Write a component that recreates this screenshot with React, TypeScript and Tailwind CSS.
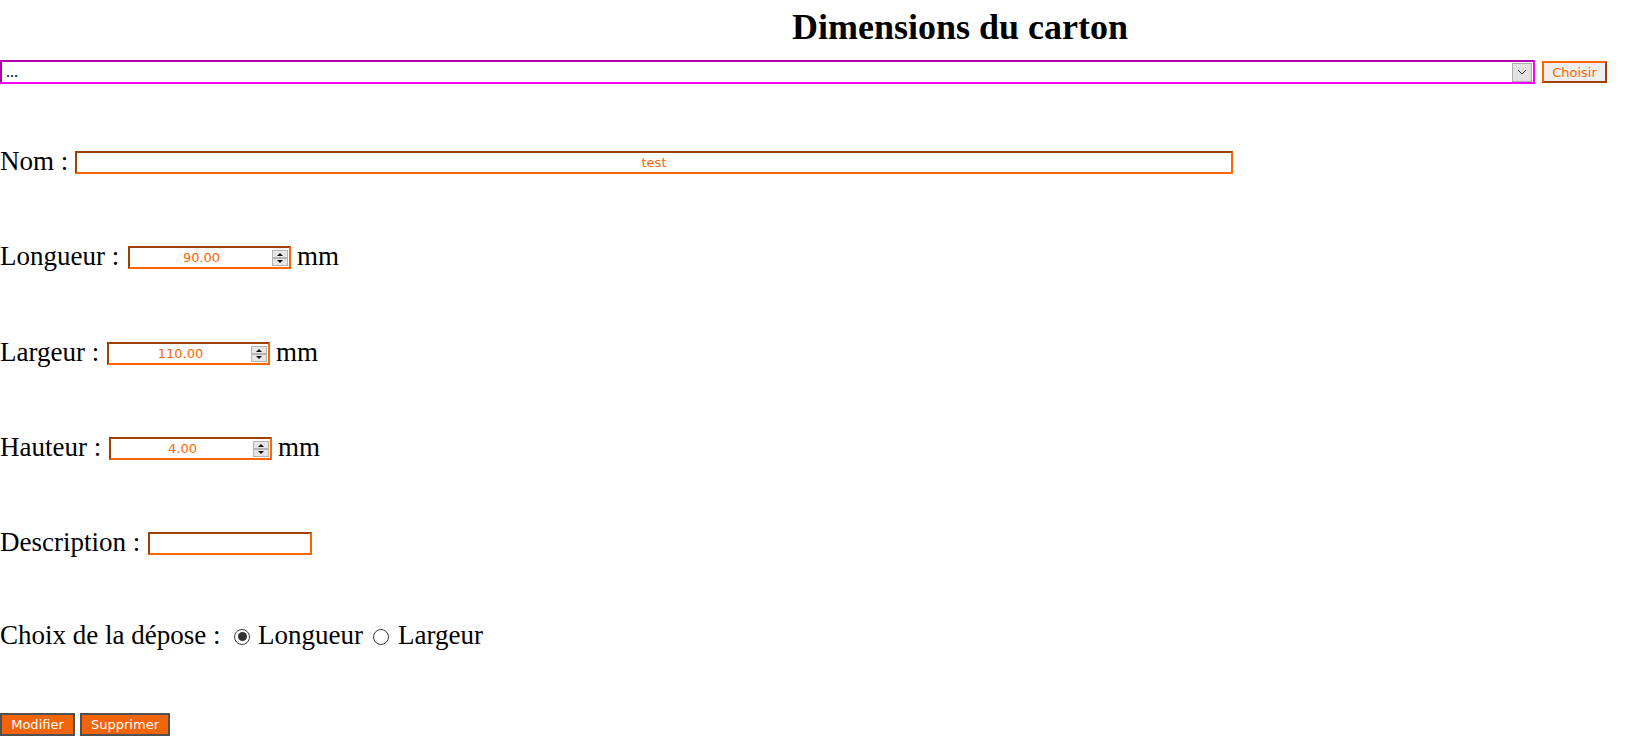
import React from "react";

const serif = "[font-family:'Liberation_Serif','Times_New_Roman',serif]";

function Spinner() {
  return (
    <svg width="16" height="16" viewBox="0 0 16 16" className="shrink-0">
      <rect x="0.5" y="0.5" width="15" height="7" fill="#e6e6e6" stroke="#b4b4b4" />
      <rect x="0.5" y="8.5" width="15" height="7" fill="#e6e6e6" stroke="#b4b4b4" />
      <path d="M5 6 L8 3 L11 6 Z" fill="#111" />
      <path d="M5 10 L8 13 L11 10 Z" fill="#111" />
    </svg>
  );
}

function NumberInput({ value }: { value: string }) {
  return (
    <div className="flex h-[23px] w-[163px] shrink-0 items-center border-2 border-t-[#a04000] border-l-[#a04000] border-b-[#ff6600] border-r-[#ff6600] bg-white pl-[1px] pr-[1px]">
      <span className="flex-1 text-center text-[13px] leading-none text-[#ff6600] [font-family:'DejaVu_Sans',sans-serif]">
        {value}
      </span>
      <Spinner />
    </div>
  );
}

function Radio({ checked }: { checked?: boolean }) {
  return (
    <span className="mt-[2px] flex h-[16px] w-[16px] shrink-0 items-center justify-center rounded-full border-[1.5px] border-[#3b3b3b] bg-white">
      {checked ? <span className="h-[9px] w-[9px] rounded-full bg-[#333333]" /> : null}
    </span>
  );
}

export default function App() {
  return (
    <div className={`min-h-[753px] w-full bg-white text-black ${serif}`}>
      <h1 className="h-[48px] pl-[278px] pt-[7px] text-center text-[36px] font-bold leading-[41px]">
        Dimensions du carton
      </h1>

      <div className="mt-[12px] flex h-[24px] items-center">
        <div className="flex h-[24px] w-[1535px] shrink-0 items-center border-2 border-t-[#b000b0] border-l-[#b000b0] border-b-[#ff00ff] border-r-[#ff00ff] bg-white">
          <span className="flex-1 pl-[4px] text-[16px] leading-none">...</span>
          <span className="mr-[1px] flex h-[19px] w-[20px] items-center justify-center border border-[#adadad] bg-[#e1e1e1]">
            <svg width="10" height="6" viewBox="0 0 10 6">
              <path d="M1 1 L5 5 L9 1" fill="none" stroke="#333" strokeWidth="1" />
            </svg>
          </span>
        </div>
        <button className="ml-[7px] flex h-[22px] w-[65px] items-center justify-center border-2 border-t-[#ff6600] border-l-[#ff6600] border-b-[#a04000] border-r-[#a04000] bg-[#efefef] text-[13px] leading-none text-[#ff6600] [font-family:'DejaVu_Sans',sans-serif]">
          Choisir
        </button>
      </div>

      <div className="mt-[67px] flex h-[23px] items-center text-[27px]">
        <span className="mb-[2px] w-[75px] shrink-0 whitespace-nowrap leading-[23px]">Nom :</span>
        <div className="flex h-[23px] w-[1158px] shrink-0 items-center justify-center border-2 border-t-[#a04000] border-l-[#a04000] border-b-[#ff6600] border-r-[#ff6600] bg-white">
          <span className="text-[13px] leading-none text-[#ff6600] [font-family:'DejaVu_Sans',sans-serif]">test</span>
        </div>
      </div>

      <div className="mt-[72px] flex h-[23px] items-center text-[27px]">
        <span className="mb-[2px] w-[128px] shrink-0 whitespace-nowrap leading-[23px]">Longueur :</span>
        <NumberInput value="90.00" />
        <span className="mb-[2px] ml-[6px] leading-[23px]">mm</span>
      </div>

      <div className="mt-[73px] flex h-[23px] items-center text-[27px]">
        <span className="mb-[2px] w-[107px] shrink-0 whitespace-nowrap leading-[23px]">Largeur :</span>
        <NumberInput value="110.00" />
        <span className="mb-[2px] ml-[6px] leading-[23px]">mm</span>
      </div>

      <div className="mt-[72px] flex h-[23px] items-center text-[27px]">
        <span className="mb-[2px] w-[109px] shrink-0 whitespace-nowrap leading-[23px]">Hauteur :</span>
        <NumberInput value="4.00" />
        <span className="mb-[2px] ml-[6px] leading-[23px]">mm</span>
      </div>

      <div className="mt-[72px] flex h-[23px] items-center text-[27px]">
        <span className="mb-[2px] w-[148px] shrink-0 whitespace-nowrap leading-[23px]">Description :</span>
        <div className="h-[23px] w-[164px] shrink-0 border-2 border-t-[#a04000] border-l-[#a04000] border-b-[#ff6600] border-r-[#ff6600] bg-white" />
      </div>

      <div className="mt-[65px] flex h-[31px] items-center text-[27px]">
        <span className="w-[234px] shrink-0 whitespace-nowrap leading-[31px]">Choix de la dépose :</span>
        <Radio checked />
        <span className="ml-[8px] w-[115px] shrink-0 whitespace-nowrap leading-[31px]">Longueur</span>
        <Radio />
        <span className="ml-[9px] whitespace-nowrap leading-[31px]">Largeur</span>
      </div>

      <div className="mt-[62px] flex h-[23px] items-center gap-[5px] [font-family:'DejaVu_Sans',sans-serif]">
        <button className="flex h-[23px] w-[75px] items-center justify-center border-2 border-[#505050] bg-[#f0640a] text-[13px] leading-none text-white">
          Modifier
        </button>
        <button className="flex h-[23px] w-[90px] items-center justify-center border-2 border-[#505050] bg-[#f0640a] text-[13px] leading-none text-white">
          Supprimer
        </button>
      </div>
    </div>
  );
}
